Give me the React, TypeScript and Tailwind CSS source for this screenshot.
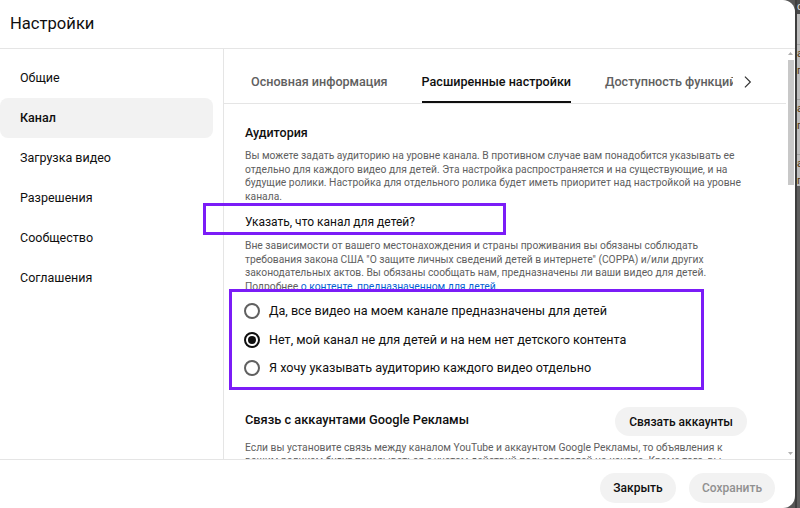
import React from "react";

const sideItems = ["Общие", "Канал", "Загрузка видео", "Разрешения", "Сообщество", "Соглашения"];

function Radio({ checked }: { checked?: boolean }) {
  return (
    <span
      className={
        "flex h-[16px] w-[16px] shrink-0 items-center justify-center rounded-full border-2 " +
        (checked ? "border-[#0f0f0f]" : "border-[#606060]")
      }
    >
      {checked && <span className="h-[8px] w-[8px] rounded-full bg-[#0f0f0f]" />}
    </span>
  );
}

export default function App() {
  return (
    <div className="relative flex h-[508px] w-[800px] overflow-hidden bg-[#575757] font-[Roboto,sans-serif] text-[#0f0f0f]">
      {/* dialog */}
      <div className="flex h-full w-[795px] shrink-0 flex-col overflow-hidden rounded-r-[12px] bg-white">
        {/* header */}
        <div className="flex h-[49px] shrink-0 items-center border-b border-[#e5e5e5] pl-[10px] pb-[1px]">
          <span className="text-[16.6px] leading-[22px] text-[#0f0f0f]">Настройки</span>
        </div>
        {/* body */}
        <div className="flex min-h-0 flex-1">
          {/* sidebar */}
          <div className="flex w-[224px] shrink-0 flex-col border-r border-[#e5e5e5] pt-[9px] pr-[10px]">
            {sideItems.map((t) => (
              <div
                key={t}
                className={
                  "flex h-[40px] items-center rounded-lg pl-[20px] text-[12.5px] " +
                  (t === "Канал" ? "bg-[#f2f2f2] font-medium text-[#0f0f0f]" : "text-[#0f0f0f]")
                }
              >
                {t}
              </div>
            ))}
          </div>
          {/* main */}
          <div className="flex min-w-0 flex-1">
            <div className="flex min-w-0 flex-1 flex-col">
              {/* tabs */}
              <div className="flex h-[55px] shrink-0 border-b border-[#e5e5e5]">
                <div className="flex w-[509px] shrink-0 gap-[34px] overflow-hidden pl-[27px]">
                  <div className="flex h-[54px] shrink-0 items-center border-b-2 border-transparent pt-[14px] text-[12.6px] font-medium text-[#606060]">
                    Основная информация
                  </div>
                  <div className="flex h-[54px] shrink-0 items-center border-b-2 border-[#0f0f0f] pt-[14px] text-[12.6px] font-medium text-[#0f0f0f]">
                    Расширенные настройки
                  </div>
                  <div className="flex h-[54px] shrink-0 items-center border-b-2 border-transparent pt-[14px] text-[12.6px] font-medium text-[#606060]">
                    Доступность функций
                  </div>
                </div>
                <div className="flex w-[28px] items-center justify-center pt-[12px]">
                  <svg width="20" height="20" viewBox="0 0 24 24" fill="none" stroke="#303030" strokeWidth="1.4">
                    <path d="M9.5 5.5l6.5 6.5-6.5 6.5" />
                  </svg>
                </div>
              </div>
              {/* content */}
              <div className="min-h-0 flex-1 overflow-hidden pl-[21px] pr-[20px]">
                <div className="mt-[19px] text-[12.5px] font-medium leading-[20px]">Аудитория</div>
                <div className="mt-[6px] whitespace-nowrap text-[10.3px] leading-[13.5px] text-[#606060]">
                  Вы можете задать аудиторию на уровне канала. В противном случае вам понадобится указывать ее
                  <br />
                  отдельно для каждого видео для детей. Эта настройка распространяется и на существующие, и на
                  <br />
                  будущие ролики. Настройка для отдельного ролика будет иметь приоритет над настройкой на уровне
                  <br />
                  канала.
                </div>
                <div className="mt-[9px] text-[12px] leading-[20px]">Указать, что канал для детей?</div>
                <div className="mt-[7px] whitespace-nowrap text-[10.3px] leading-[13.5px] text-[#606060]">
                  Вне зависимости от вашего местонахождения и страны проживания вы обязаны соблюдать
                  <br />
                  требования закона США "О защите личных сведений детей в интернете" (COPPA) и/или других
                  <br />
                  законодательных актов. Вы обязаны сообщать нам, предназначены ли ваши видео для детей.
                  <br />
                  Подробнее <span className="text-[#065fd4]">о контенте, предназначенном для детей</span>.
                </div>
                <div className="mt-[4px] flex flex-col">
                  {[
                    { t: "Да, все видео на моем канале предназначены для детей", c: false },
                    { t: "Нет, мой канал не для детей и на нем нет детского контента", c: true },
                    { t: "Я хочу указывать аудиторию каждого видео отдельно", c: false },
                  ].map((r) => (
                    <div key={r.t} className="-ml-[1px] flex h-[28.5px] items-center gap-[9px]">
                      <Radio checked={r.c} />
                      <span className="text-[12.6px] leading-[18px] text-[#0f0f0f]">{r.t}</span>
                    </div>
                  ))}
                </div>
                <div className="mt-[24px] flex h-[30px] items-center justify-between pr-[19px]">
                  <span className="pb-[4px] text-[12.8px] font-medium leading-[20px]">Связь с аккаунтами Google Рекламы</span>
                  <button className="h-[29px] rounded-full bg-[#f2f2f2] px-[14px] text-[12px] font-medium text-[#0f0f0f]">
                    Связать аккаунты
                  </button>
                </div>
                <div className="mt-[4px] whitespace-nowrap text-[10.3px] leading-[13.5px] text-[#606060]">
                  Если вы установите связь между каналом YouTube и аккаунтом Google Рекламы, то объявления к
                  <br />
                  вашим роликам будут показываться с учетом действий пользователей на канале. Кроме того, вы
                </div>
              </div>
            </div>
            {/* scrollbar */}
            <div className="flex w-[9px] shrink-0 flex-col items-center pt-[2px] pb-[3px]">
              <svg width="7" height="5" viewBox="0 0 7 5" className="shrink-0">
                <path d="M3.5 1L6 4H1z" fill="#b0b0b0" />
              </svg>
              <div className="mt-[4px] h-[125px] w-[6px] bg-[#c8c8c8]" />
              <div className="flex-1" />
              <svg width="7" height="5" viewBox="0 0 7 5" className="shrink-0">
                <path d="M3.5 4L6 1H1z" fill="#b0b0b0" />
              </svg>
            </div>
          </div>
        </div>
        {/* footer */}
        <div className="flex h-[49px] shrink-0 items-start justify-end gap-[13px] border-t border-[#e5e5e5] pt-[13px] pr-[20px]">
          <button className="h-[30px] w-[76px] rounded-full bg-[#f2f2f2] text-[12px] font-medium text-[#0f0f0f]">
            Закрыть
          </button>
          <button className="h-[30px] w-[86px] rounded-full bg-[#f2f2f2] text-[12px] font-medium text-[#909090]">
            Сохранить
          </button>
        </div>
      </div>
      {/* backdrop strip */}
      <div className="flex flex-1 flex-col overflow-hidden border-l-2 border-[#3e3e3e]">
        <div className="h-[14px] bg-[#4a4a4a] text-[11px] leading-[14px] text-[#ddd]">с</div>
        <div className="flex h-[172px] flex-col bg-[#bdbdbd] text-[11px] leading-[17px] text-[#5a3a10]">
          <div className="mt-[30px] border-t border-[#a0a0a0]">а</div>
          <div>г</div>
          <div className="mt-[20px] border-t border-[#a0a0a0]">а</div>
          <div>г</div>
          <div className="mt-[20px] border-t border-[#a0a0a0]">а</div>
          <div>г</div>
        </div>
        <div className="flex-1 bg-[#5e5e5e]" />
      </div>
      {/* annotation boxes */}
      <div className="pointer-events-none absolute left-[203px] top-[203px] h-[32px] w-[303px] border-[3px] border-[#7b1cf7]" />
      <div className="pointer-events-none absolute left-[229px] top-[289px] h-[101px] w-[475px] border-[3px] border-[#7b1cf7]" />
    </div>
  );
}
